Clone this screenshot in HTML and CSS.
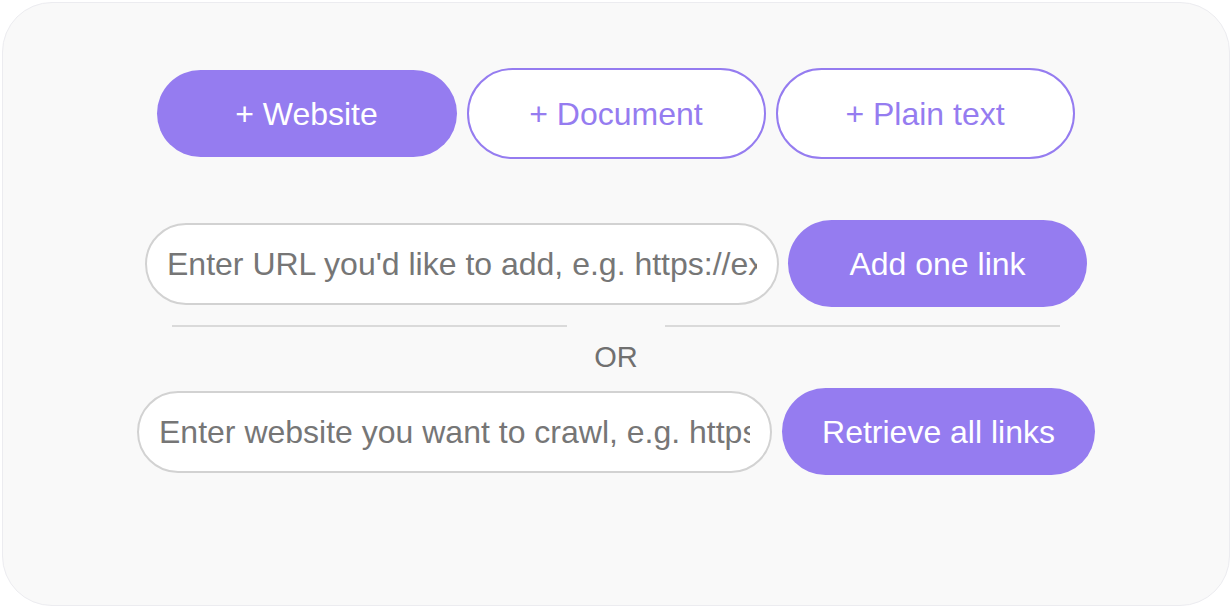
FILE: index.html
```html
<!DOCTYPE html>
<html>
<head>
<meta charset="utf-8">
<link rel="stylesheet" href="styles.css">
</head>
<body>
<div class="card">
  <div class="tabs">
    <button class="tab tab-active">+ Website</button>
    <button class="tab tab-outline">+ Document</button>
    <button class="tab tab-outline">+ Plain text</button>
  </div>
  <div class="row row-one">
    <input class="field field-one" type="text" placeholder="Enter URL you'd like to add, e.g. https://example.com">
    <button class="action action-one">Add one link</button>
  </div>
  <div class="divider">
    <span class="line"></span>
    <span class="line"></span>
  </div>
  <div class="or">OR</div>
  <div class="row row-two">
    <input class="field field-two" type="text" placeholder="Enter website you want to crawl, e.g. https://example.com">
    <button class="action action-two">Retrieve all links</button>
  </div>
</div>
</body>
</html>
```
FILE: styles.css
```css
html, body {
  margin: 0;
  padding: 0;
  background: #ffffff;
}
body {
  font-family: "Liberation Sans", Arial, Helvetica, sans-serif;
  width: 1232px;
  height: 608px;
  padding: 2px;
  box-sizing: border-box;
}
.card {
  box-sizing: border-box;
  width: 1228px;
  height: 604px;
  background: #f9f9f9;
  border: 1px solid #ececf0;
  border-radius: 50px;
  padding-top: 65px;
  display: flex;
  flex-direction: column;
  align-items: center;
}
.tabs {
  display: flex;
  align-items: center;
  gap: 10px;
  margin-left: -1px;
}
.tab {
  font-family: inherit;
  font-size: 32px;
  box-sizing: border-box;
  border-radius: 46px;
  cursor: pointer;
  padding: 2px 0 0;
}
.tab-active {
  width: 300px;
  height: 87px;
  background: #957cf0;
  color: #ffffff;
  border: none;
}
.tab-outline {
  width: 299px;
  height: 91px;
  background: #ffffff;
  color: #957cf0;
  border: 2px solid #957cf0;
}
.row {
  display: flex;
  align-items: center;
  gap: 9px;
}
.row-one {
  margin-top: 61px;
}
.row-two {
  margin-top: 14px;
}
.field {
  box-sizing: border-box;
  height: 82px;
  border: 2px solid #d2d2d2;
  border-radius: 41px;
  background: #ffffff;
  font-family: inherit;
  font-size: 32px;
  color: #333333;
  padding: 2px 20px 0;
  outline: none;
}
.field::placeholder {
  color: #767676;
}
.field-one {
  width: 634px;
}
.field-two {
  width: 635px;
}
.action {
  box-sizing: border-box;
  height: 87px;
  border: none;
  border-radius: 44px;
  background: #957cf0;
  color: #ffffff;
  font-family: inherit;
  font-size: 32px;
  padding: 2px 0 0;
  cursor: pointer;
}
.action-one {
  width: 299px;
}
.action-two {
  width: 313px;
  margin-left: 1px;
}
.divider {
  margin-top: 18px;
  display: flex;
  gap: 98px;
}
.line {
  display: block;
  width: 395px;
  height: 2px;
  background: #dadada;
}
.or {
  margin-top: 13px;
  font-size: 29px;
  line-height: 34px;
  color: #707070;
}
```
